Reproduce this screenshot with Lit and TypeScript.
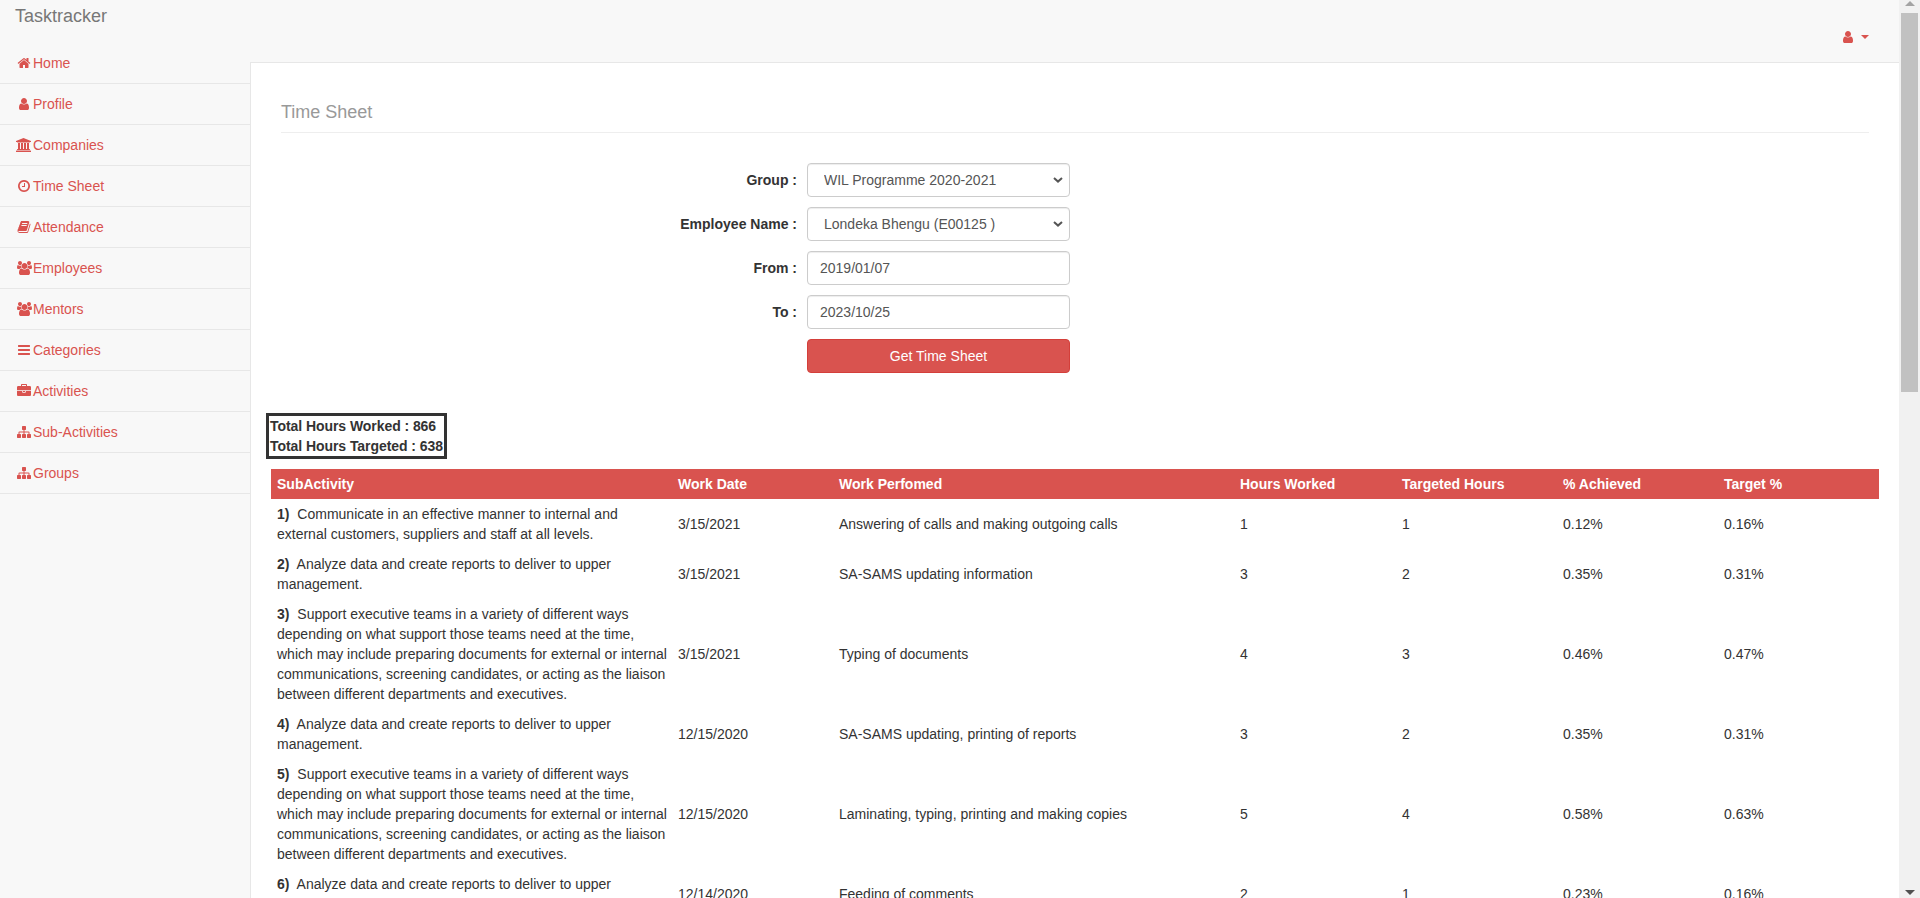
import { LitElement, html, css, svg } from "lit";
import { customElement } from "lit/decorators.js";

const ICONS: Record<string, [number, any]> = {
  home: [1792, svg`<path d="M1472 992v480q0 26-19 45t-45 19h-384v-384h-256v384h-384q-26 0-45-19t-19-45v-480q0-1 .5-3t.5-3l575-474 575 474q1 2 1 6zm223-69l-62 74q-8 9-21 11h-3q-13 0-21-7l-692-577-692 577q-12 8-24 7-13-2-21-11l-62-74q-8-10-7-23.5t11-21.5l719-599q32-26 76-26t76 26l244 204v-195q0-14 9-23t23-9h192q14 0 23 9t9 23v408l219 182q10 8 11 21.5t-7 23.5z"/>`],
  user: [1792, svg`<path d="M1536 1399q0 109-62.5 187t-150.5 78h-854q-88 0-150.5-78t-62.5-187q0-85 8.5-160.5t31.5-152 58.5-131 94-89 134.5-34.5q131 128 313 128t313-128q76 0 134.5 34.5t94 89 58.5 131 31.5 152 8.5 160.5zm-256-887q0 159-112.5 271.5t-271.5 112.5-271.5-112.5-112.5-271.5 112.5-271.5 271.5-112.5 271.5 112.5 112.5 271.5z"/>`],
  bank: [2048, svg`<path d="M960 0l960 384v128h-128q0 26-20.5 45t-48.5 19h-1526q-28 0-48.5-19t-20.5-45h-128v-128zm-704 640h256v768h128v-768h256v768h128v-768h256v768h128v-768h256v768h59q28 0 48.5 19t20.5 45v64h-1664v-64q0-26 20.5-45t48.5-19h59v-768zm1595 960q28 0 48.5 19t20.5 45v128h-1920v-128q0-26 20.5-45t48.5-19h1782z"/>`],
  clock: [1792, svg`<path d="M1024 544v448q0 14-9 23t-23 9h-320q-14 0-23-9t-9-23v-64q0-14 9-23t23-9h224v-352q0-14 9-23t23-9h64q14 0 23 9t9 23zm416 352q0-148-73-273t-198-198-273-73-273 73-198 198-73 273 73 273 198 198 273 73 273-73 198-198 73-273zm224 0q0 209-103 385.5t-279.5 279.5-385.5 103-385.5-103-279.5-279.5-103-385.5 103-385.5 279.5-279.5 385.5-103 385.5 103 279.5 279.5 103 385.5z"/>`],
  book: [1792, svg`<path d="M1703 478q40 57 18 129l-275 906q-19 64-76.5 107.5t-122.5 43.5h-923q-77 0-148.5-53.5t-99.5-131.5q-24-67-2-127 0-4 3-27t4-37q1-8-3-21.5t-3-19.5q2-11 8-21t16.5-23.5 16.5-23.5q23-38 45-91.5t30-91.5q3-10 .5-30t-.5-28q3-11 17-28t17-23q21-36 42-92t25-90q1-9-2.5-32t.5-28q4-13 22-30.5t22-22.5q19-26 42.5-84.5t27.5-96.5q1-8-3-25.5t-2-26.5q2-8 9-18t18-23 17-21q8-12 16.5-30.5t15-35 16-36 19.5-32 26.5-23.5 36-11.5 47.5 5.5l-1 3q38-9 51-9h761q74 0 114 56t18 130l-274 906q-36 119-71.5 153.5t-128.5 34.5h-869q-27 0-38 15-11 16-1 43 24 70 144 70h923q29 0 56-15.5t35-41.5l300-987q7-22 5-57 38 15 59 43zm-1064 2q-4 13 2 22.5t20 9.5h608q13 0 25.5-9.5t16.5-22.5l21-64q4-13-2-22.5t-20-9.5h-608q-13 0-25.5 9.5t-16.5 22.5zm-83 256q-4 13 2 22.5t20 9.5h608q13 0 25.5-9.5t16.5-22.5l21-64q4-13-2-22.5t-20-9.5h-608q-13 0-25.5 9.5t-16.5 22.5z"/>`],
  users: [1920, svg`<path d="M593 896q-162 5-265 128h-134q-82 0-138-40.5t-56-118.5q0-353 124-353 6 0 43.5 21t97.5 42.5 119 21.5q67 0 133-23-5 37-5 66 0 139 81 256zm1071 637q0 120-73 189.5t-194 69.5h-874q-121 0-194-69.5t-73-189.5q0-53 3.5-103.5t14-109 26.5-108.5 43-97.5 62-81 85.5-53.5 111.5-20q10 0 43 21.5t73 48 107 48 135 21.5 135-21.5 107-48 73-48 43-21.5q61 0 111.5 20t85.5 53.5 62 81 43 97.5 26.5 108.5 14 109 3.5 103.5zm-1024-1277q0 106-75 181t-181 75-181-75-75-181 75-181 181-75 181 75 75 181zm704 384q0 159-112.5 271.5t-271.5 112.5-271.5-112.5-112.5-271.5 112.5-271.5 271.5-112.5 271.5 112.5 112.5 271.5zm576 225q0 78-56 118.5t-138 40.5h-134q-103-123-265-128 81-117 81-256 0-29-5-66 66 23 133 23 59 0 119-21.5t97.5-42.5 43.5-21q124 0 124 353zm-128-609q0 106-75 181t-181 75-181-75-75-181 75-181 181-75 181 75 75 181z"/>`],
  bars: [1664, svg`<path d="M1664 1344v128q0 26-19 45t-45 19h-1408q-26 0-45-19t-19-45v-128q0-26 19-45t45-19h1408q26 0 45 19t19 45zm0-512v128q0 26-19 45t-45 19h-1408q-26 0-45-19t-19-45v-128q0-26 19-45t45-19h1408q26 0 45 19t19 45zm0-512v128q0 26-19 45t-45 19h-1408q-26 0-45-19t-19-45v-128q0-26 19-45t45-19h1408q26 0 45 19t19 45z" transform="translate(-128 0)"/>`],
  briefcase: [1792, svg`<path d="M640 256h512v-128h-512v128zm1152 640v480q0 66-47 113t-113 47h-1472q-66 0-113-47t-47-113v-480h672v160q0 26 19 45t45 19h320q26 0 45-19t19-45v-160h672zm-768 0v128h-256v-128h256zm768-480v384h-1792v-384q0-66 47-113t113-47h352v-160q0-40 28-68t68-28h576q40 0 68 28t28 68v160h352q66 0 113 47t47 113z"/>`],
  sitemap: [1792, svg`<path d="M1792 1248v320q0 40-28 68t-68 28h-320q-40 0-68-28t-28-68v-320q0-40 28-68t68-28h96v-192h-512v192h96q40 0 68 28t28 68v320q0 40-28 68t-68 28h-320q-40 0-68-28t-28-68v-320q0-40 28-68t68-28h96v-192h-512v192h96q40 0 68 28t28 68v320q0 40-28 68t-68 28h-320q-40 0-68-28t-28-68v-320q0-40 28-68t68-28h96v-192q0-52 38-90t90-38h512v-192h-96q-40 0-68-28t-28-68v-320q0-40 28-68t68-28h320q40 0 68 28t28 68v320q0 40-28 68t-68 28h-96v192h512q52 0 90 38t38 90v192h96q40 0 68 28t28 68z"/>`],
};

const icon = (name: string, size = 14) => {
  const [w, body] = ICONS[name];
  return svg`<svg class="ic" viewBox="0 0 ${w} 1792" height=${size} width=${(w / 1792) * size} fill="currentColor">${body}</svg>`;
};

const NAV = [
  ["home", "Home"],
  ["user", "Profile"],
  ["bank", "Companies"],
  ["clock", "Time Sheet"],
  ["book", "Attendance"],
  ["users", "Employees"],
  ["users", "Mentors"],
  ["bars", "Categories"],
  ["briefcase", "Activities"],
  ["sitemap", "Sub-Activities"],
  ["sitemap", "Groups"],
];

const SUPPORT =
  "Support executive teams in a variety of different ways depending on what support those teams need at the time, which may include preparing documents for external or internal communications, screening candidates, or acting as the liaison between different departments and executives.";
const ANALYZE = "Analyze data and create reports to deliver to upper management.";

const ROWS = [
  ["Communicate in an effective manner to internal and external customers, suppliers and staff at all levels.", "3/15/2021", "Answering of calls and making outgoing calls", "1", "1", "0.12%", "0.16%"],
  [ANALYZE, "3/15/2021", "SA-SAMS updating information", "3", "2", "0.35%", "0.31%"],
  [SUPPORT, "3/15/2021", "Typing of documents", "4", "3", "0.46%", "0.47%"],
  [ANALYZE, "12/15/2020", "SA-SAMS updating, printing of reports", "3", "2", "0.35%", "0.31%"],
  [SUPPORT, "12/15/2020", "Laminating, typing, printing and making copies", "5", "4", "0.58%", "0.63%"],
  [ANALYZE, "12/14/2020", "Feeding of comments", "2", "1", "0.23%", "0.16%"],
];

const HEAD = ["SubActivity", "Work Date", "Work Perfomed", "Hours Worked", "Targeted Hours", "% Achieved", "Target %"];

@customElement("app-root")
export class AppRoot extends LitElement {
  static styles = css`
    :host {
      display: flex;
      height: 100vh;
      overflow: hidden;
      font-family: "Liberation Sans", Arial, sans-serif;
      font-size: 14px;
      line-height: 20px;
      color: #333;
      background: #f8f8f8;
    }
    * { box-sizing: border-box; }
    .ic { display: block; }
    .left {
      width: 250px;
      flex: none;
      background: #f8f8f8;
    }
    .brand {
      height: 43px;
      padding: 6px 0 0 15px;
      font-size: 18px;
      color: #777;
    }
    .nav { list-style: none; margin: 0; padding: 0; }
    .nav li {
      height: 41px;
      border-bottom: 1px solid #e7e7e7;
      display: flex;
      align-items: center;
      padding-left: 15px;
      color: #d9534f;
    }
    .fw { width: 18px; flex: none; display: flex; justify-content: center; }
    .right { flex: 1; min-width: 0; display: flex; flex-direction: column; }
    .top {
      height: 62px;
      flex: none;
      display: flex;
      justify-content: flex-end;
      align-items: flex-start;
      padding: 30px 30px 0 0;
      gap: 6px;
      color: #d9534f;
    }
    .caret {
      width: 0;
      height: 0;
      margin-top: 5px;
      border-left: 4px solid transparent;
      border-right: 4px solid transparent;
      border-top: 4px solid #d9534f;
    }
    .page {
      flex: 1;
      min-height: 0;
      overflow: hidden;
      background: #fff;
      border-left: 1px solid #e7e7e7;
      border-top: 1px solid #e7e7e7;
      padding: 0 30px;
    }
    .title {
      margin: 0 0 30px;
      height: 70px;
      padding-top: 39px;
      font-size: 18px;
      font-weight: 400;
      line-height: 20px;
      color: #999;
      border-bottom: 1px solid #eee;
    }
    .form {
      display: grid;
      grid-template-columns: 516px 263px;
      row-gap: 10px;
      column-gap: 10px;
      align-items: center;
    }
    .form label { text-align: right; font-weight: 700; }
    .ctl {
      display: block;
      width: 100%;
      height: 34px;
      padding: 6px 12px;
      font: inherit;
      color: #555;
      background-color: #fff;
      border: 1px solid #ccc;
      border-radius: 4px;
      box-shadow: inset 0 1px 1px rgba(0, 0, 0, 0.075);
    }
    select.ctl {
      appearance: none;
      -webkit-appearance: none;
      padding-left: 16px;
      background-image: url("data:image/svg+xml,%3Csvg xmlns='http://www.w3.org/2000/svg' viewBox='0 0 10 6'%3E%3Cpath d='M1 1l4 3.6L9 1' fill='none' stroke='%23555' stroke-width='2'/%3E%3C/svg%3E");
      background-repeat: no-repeat;
      background-position: right 6px center;
      background-size: 10px 6px;
    }
    .btn {
      grid-column: 2;
      height: 34px;
      color: #fff;
      font: inherit;
      background: #d9534f;
      border: 1px solid #d43f3a;
      border-radius: 4px;
    }
    .totals {
      display: block;
      width: 181px;
      height: 46px;
      margin: 40px 0 0 -15px;
      border: 3px solid #333;
      padding-left: 1px;
      font-weight: 700;
      letter-spacing: -0.06px;
      white-space: nowrap;
    }
    table {
      display: table;
      table-layout: fixed;
      border-collapse: collapse;
      width: 1608px;
      margin: 10px 0 0 -10px;
    }
    .w401 { width: 401px; }
    .w161 { width: 161px; }
    .w162 { width: 162px; }
    th {
      height: 30px;
      padding: 0 6px;
      background: #d9534f;
      color: #fff;
      text-align: left;
      font-weight: 700;
    }
    td { padding: 5px 6px; vertical-align: middle; }
    td:first-child { padding-right: 3px; }
    td b { margin-right: 4px; }
    .scroll {
      width: 21px;
      flex: none;
      background: #f1f1f1;
      display: flex;
      flex-direction: column;
      align-items: center;
    }
    .up {
      width: 0;
      height: 0;
      margin: 1px 0 7px;
      border-left: 5px solid transparent;
      border-right: 5px solid transparent;
      border-bottom: 5px solid #a3a3a3;
    }
    .thumb { width: 17px; height: 379px; background: #c1c1c1; }
    .down {
      width: 0;
      height: 0;
      margin: auto 0 3px;
      border-left: 5px solid transparent;
      border-right: 5px solid transparent;
      border-top: 5px solid #505050;
    }
  `;

  render() {
    return html`
      <div class="left">
        <div class="brand">Tasktracker</div>
        <ul class="nav">
          ${NAV.map(([ic, label]) => html`<li><span class="fw">${icon(ic)}</span>${label}</li>`)}
        </ul>
      </div>
      <div class="right">
        <div class="top">${icon("user")}<span class="caret"></span></div>
        <div class="page">
          <h1 class="title">Time Sheet</h1>
          <div class="form">
            <label>Group :</label>
            <select class="ctl"><option>WIL Programme 2020-2021</option></select>
            <label>Employee Name :</label>
            <select class="ctl"><option>Londeka Bhengu (E00125 )</option></select>
            <label>From :</label>
            <input class="ctl" value="2019/01/07" />
            <label>To :</label>
            <input class="ctl" value="2023/10/25" />
            <button class="btn">Get Time Sheet</button>
          </div>
          <div class="totals">
            <div>Total Hours Worked : 866</div>
            <div>Total Hours Targeted : 638</div>
          </div>
          <table>
            <colgroup>
              <col class="w401" /><col class="w161" /><col class="w401" />
              <col class="w162" /><col class="w161" /><col class="w161" /><col class="w161" />
            </colgroup>
            <thead><tr>${HEAD.map((h) => html`<th>${h}</th>`)}</tr></thead>
            <tbody>
              ${ROWS.map(
                (r, i) => html`<tr>
                  <td><b>${i + 1})</b> ${r[0]}</td>
                  ${r.slice(1).map((c) => html`<td>${c}</td>`)}
                </tr>`
              )}
            </tbody>
          </table>
        </div>
      </div>
      <div class="scroll">
        <div class="up"></div>
        <div class="thumb"></div>
        <div class="down"></div>
      </div>
    `;
  }
}
